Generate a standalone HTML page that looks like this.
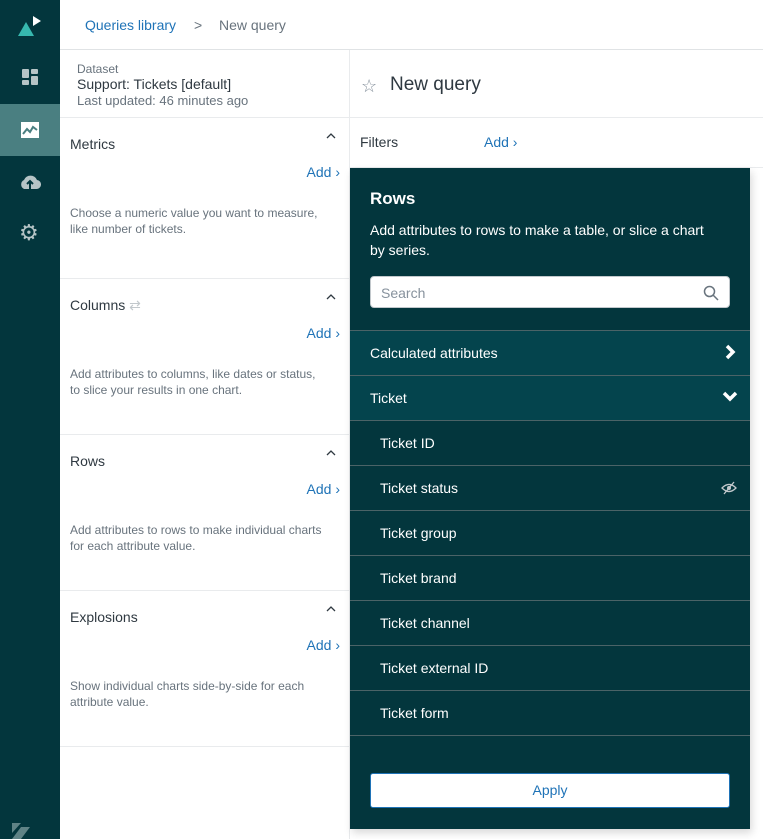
<!DOCTYPE html><html><head><style>
*{box-sizing:border-box;margin:0;padding:0}
body{width:763px;height:839px;overflow:hidden;font-family:"Liberation Sans",sans-serif;background:#fff;position:relative;color:#2f3941}
.sb{position:absolute;left:0;top:0;width:60px;height:839px;background:#03363d}
.abs{position:absolute}
.sec{position:absolute;left:60px;width:290px;border-bottom:1px solid #e9ebed}
.sec .t{position:absolute;left:10px;top:18px;font-size:14px}
.sec .c{position:absolute;right:14px;top:14px}
.sec .a{position:absolute;right:10px;top:46px;font-size:14px;color:#1f73b7}
.sec .d{position:absolute;left:10px;top:87px;font-size:12px;color:#68737d;line-height:16px;width:258px}
.row{position:absolute;left:350px;width:400px;height:45px;border-bottom:1px solid #4b6367;color:#fff;font-size:14px;line-height:44px}
</style></head><body>
<div class="sb">
<svg class="abs" style="left:17px;top:14px" width="28" height="24"><polygon points="1,22 9,8 17,22" fill="#37b8af"/><polygon points="16,2 24,7 16,12" fill="#fff"/></svg>
<svg class="abs" style="left:22px;top:69px" width="16" height="16" fill="#b6c4c6"><rect x="0" y="0" width="7" height="9" rx="1"/><rect x="9" y="0" width="7" height="5" rx="1"/><rect x="0" y="11" width="7" height="5" rx="1"/><rect x="9" y="7" width="7" height="9" rx="1"/></svg>
<div class="abs" style="left:0;top:104px;width:60px;height:52px;background:#4a7f81"></div>
<svg class="abs" style="left:21px;top:122px" width="18" height="16"><rect width="18" height="16" fill="#fff"/><polyline points="2,12 6,7 9,10 12,5 16,8" stroke="#4a7f81" stroke-width="2" fill="none"/></svg>
<svg class="abs" style="left:19px;top:173px" width="22" height="18"><path d="M5,16 A5,5 0 0 1 5,7 A7,7 0 0 1 18,7 A4.5,4.5 0 0 1 17,16 Z" fill="#b6c4c6"/><path d="M11,16V9M8,11l3-3 3,3" stroke="#03363d" stroke-width="2" fill="none"/></svg>
<div class="abs" style="left:19px;top:221px;font-size:22px;color:#b6c4c6;line-height:24px">⚙</div>
<svg class="abs" style="left:12px;top:823px" width="18" height="16" fill="#5f8386"><polygon points="0,0 9,0 0,10"/><polygon points="9,4 18,4 9,16 0,16"/></svg>
</div>
<div class="abs" style="left:60px;top:0;width:703px;height:50px;border-bottom:1px solid #e0e3e5"></div>
<div class="abs" style="left:85px;top:17px;font-size:14px;color:#1f73b7">Queries library</div>
<div class="abs" style="left:194px;top:17px;font-size:14px;color:#68737d">&gt;</div>
<div class="abs" style="left:219px;top:17px;font-size:14px;color:#68737d">New query</div>
<div class="abs" style="left:349px;top:50px;width:1px;height:789px;background:#e9ebed"></div>
<div class="abs" style="left:77px;top:62px;font-size:12px;color:#68737d">Dataset</div>
<div class="abs" style="left:77px;top:76px;font-size:14px;color:#2f3941">Support: Tickets [default]</div>
<div class="abs" style="left:77px;top:93px;font-size:13px;color:#68737d">Last updated: 46 minutes ago</div>
<div class="abs" style="left:60px;top:117px;width:290px;height:1px;background:#e9ebed"></div>
<div class="sec" style="top:118px;height:161px"><div class="t">Metrics</div><svg class="c" width="10" height="7"><path d="M1,6l4-4 4,4" stroke="#2f3941" stroke-width="1.3" fill="none"/></svg><div class="a">Add ›</div><div class="d">Choose a numeric value you want to measure, like number of tickets.</div></div>
<div class="sec" style="top:279px;height:156px"><div class="t">Columns <span style="color:#c2c8cc">⇄</span></div><svg class="c" width="10" height="7"><path d="M1,6l4-4 4,4" stroke="#2f3941" stroke-width="1.3" fill="none"/></svg><div class="a">Add ›</div><div class="d">Add attributes to columns, like dates or status, to slice your results in one chart.</div></div>
<div class="sec" style="top:435px;height:156px"><div class="t">Rows</div><svg class="c" width="10" height="7"><path d="M1,6l4-4 4,4" stroke="#2f3941" stroke-width="1.3" fill="none"/></svg><div class="a">Add ›</div><div class="d">Add attributes to rows to make individual charts for each attribute value.</div></div>
<div class="sec" style="top:591px;height:156px"><div class="t">Explosions</div><svg class="c" width="10" height="7"><path d="M1,6l4-4 4,4" stroke="#2f3941" stroke-width="1.3" fill="none"/></svg><div class="a">Add ›</div><div class="d">Show individual charts side-by-side for each attribute value.</div></div>
<div class="abs" style="left:361px;top:76px;font-size:18px;color:#87929d">☆</div>
<div class="abs" style="left:390px;top:74px;font-size:19px;color:#2f3941">New query</div>
<div class="abs" style="left:350px;top:117px;width:413px;height:1px;background:#e9ebed"></div>
<div class="abs" style="left:360px;top:134px;font-size:14px">Filters</div>
<div class="abs" style="left:484px;top:134px;font-size:14px;color:#1f73b7">Add ›</div>
<div class="abs" style="left:350px;top:167px;width:413px;height:1px;background:#e9ebed"></div>
<div class="abs" style="left:350px;top:168px;width:400px;height:661px;background:#03363d;box-shadow:2px 4px 8px rgba(0,0,0,.15)"></div>
<div class="abs" style="left:370px;top:189px;font-size:17px;font-weight:bold;color:#fff">Rows</div>
<div class="abs" style="left:370px;top:220px;width:350px;font-size:14px;color:#fff;line-height:20px">Add attributes to rows to make a table, or slice a chart by series.</div>
<div class="abs" style="left:370px;top:276px;width:360px;height:32px;background:#fff;border-radius:4px;border:1px solid #c2c8cc;font-size:14px;color:#87929d;padding:8px 10px">Search</div>
<svg class="abs" style="left:703px;top:285px" width="16" height="16"><circle cx="6.5" cy="6.5" r="5" stroke="#68737d" stroke-width="1.5" fill="none"/><path d="M10,10l5,5" stroke="#68737d" stroke-width="1.5"/></svg>
<div class="abs" style="left:350px;top:330px;width:400px;height:1px;background:#4b6367"></div>
<div class="row" style="top:331px;background:#04444d;padding-left:20px">Calculated attributes<svg style="position:absolute;right:14px;top:13px" width="12" height="16"><path d="M3,2l6,6 -6,6" stroke="#fff" stroke-width="3.5" fill="none"/></svg></div>
<div class="row" style="top:376px;background:#04444d;padding-left:20px">Ticket<svg style="position:absolute;right:12px;top:15px" width="16" height="12"><path d="M2,2l6,6 6-6" stroke="#fff" stroke-width="3.5" fill="none"/></svg></div>
<div class="row" style="top:421px;padding-left:30px">Ticket ID</div>
<div class="row" style="top:466px;padding-left:30px">Ticket status<svg style="position:absolute;right:13px;top:15px" width="16" height="14"><path d="M1,7Q8,0 15,7Q8,14 1,7Z" stroke="#c2c8cc" stroke-width="1.3" fill="none"/><circle cx="8" cy="7" r="2" fill="#c2c8cc"/><path d="M3,13L13,1" stroke="#c2c8cc" stroke-width="1.3"/></svg></div>
<div class="row" style="top:511px;padding-left:30px">Ticket group</div>
<div class="row" style="top:556px;padding-left:30px">Ticket brand</div>
<div class="row" style="top:601px;padding-left:30px">Ticket channel</div>
<div class="row" style="top:646px;padding-left:30px">Ticket external ID</div>
<div class="row" style="top:691px;padding-left:30px">Ticket form</div>
<div class="abs" style="left:370px;top:773px;width:360px;height:35px;background:#fff;border:1px solid #1f73b7;border-radius:3px;text-align:center;line-height:33px;font-size:14px;color:#1f73b7">Apply</div>
</body></html>
